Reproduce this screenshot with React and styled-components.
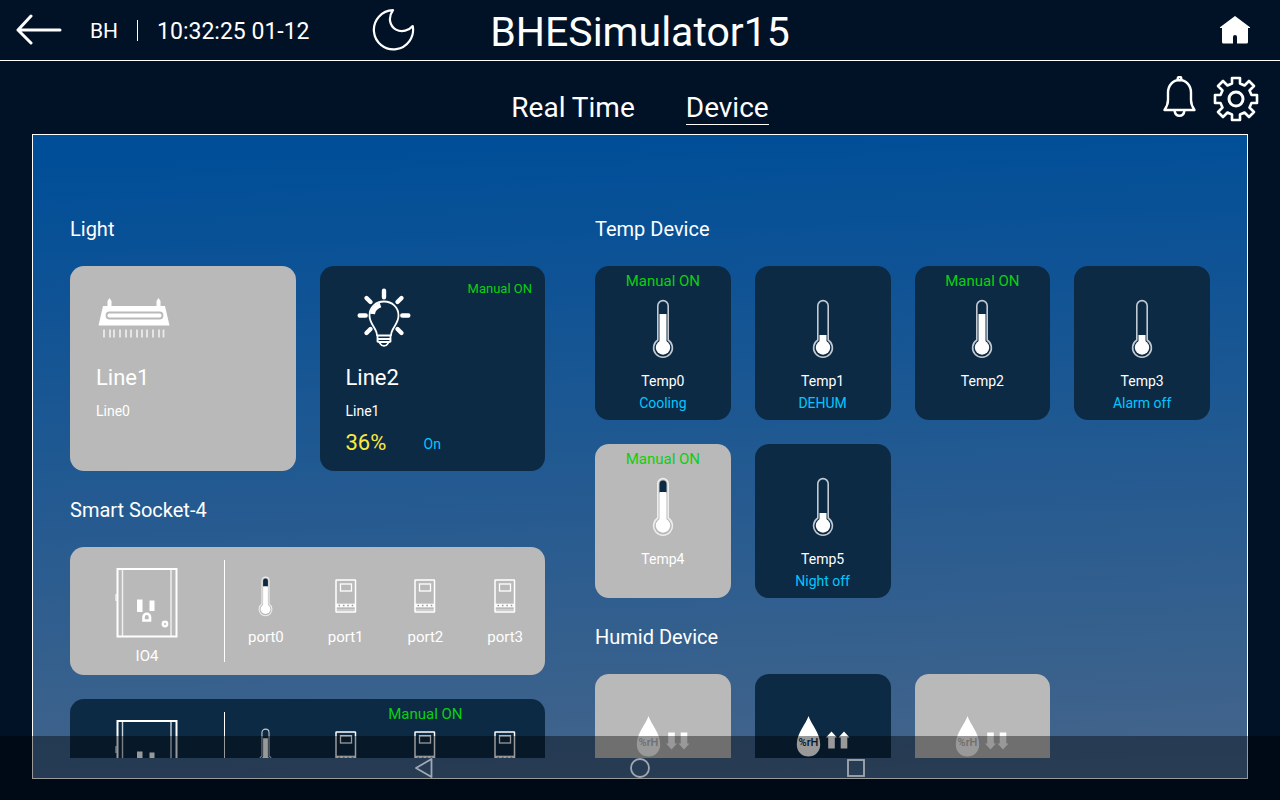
import React from "react";
import styled, { createGlobalStyle, ThemeProvider } from "styled-components";

const theme = {
  page: "#011227",
  card: "#0d2a45",
  cardOff: "#b9b9b9",
  green: "#0bd010",
  cyan: "#00c8ff",
  yellow: "#fbe93f",
};

const GlobalStyle = createGlobalStyle`
  * { box-sizing: border-box; }
  body {
    margin: 0;
    background: ${theme.page};
    color: #fff;
    font-family: Roboto, "Liberation Sans", sans-serif;
  }
  h1, h2 { margin: 0; font-weight: 400; }
  button {
    margin: 0;
    padding: 0;
    border: 0;
    background: none;
    color: inherit;
    font: inherit;
    cursor: pointer;
  }
  svg { display: block; flex: none; }
`;

const Screen = styled.div`
  display: flex;
  flex-direction: column;
  height: 100vh;
  padding-bottom: 21px;
`;

const Header = styled.header`
  display: grid;
  grid-template-columns: 1fr auto 1fr;
  align-items: center;
  height: 61px;
  padding: 0 16px;
  border-bottom: 1px solid #fff;
`;

const HeaderLeft = styled.div`
  display: flex;
  align-items: center;
`;

const SiteCode = styled.span`
  margin-left: 28px;
  font-size: 21px;
  line-height: 24px;
  padding-top: 2px;
`;

const HeaderDivider = styled.span`
  width: 1px;
  height: 21px;
  margin: 0 19px;
  background: #fff;
`;

const Clock = styled.time`
  padding-top: 4px;
  font-size: 23px;
  line-height: 26px;
  white-space: nowrap;
`;

const NightButton = styled.button`
  margin-left: 61px;
`;

const Title = styled.h1`
  padding-top: 4px;
  font-size: 41px;
  line-height: 50px;
`;

const HomeButton = styled.button`
  justify-self: end;
  margin-right: 14px;
`;

const Toolbar = styled.div`
  display: grid;
  grid-template-columns: 1fr auto 1fr;
  align-items: end;
  height: 73px;
  padding: 15px 21px 9px;
`;

const Tabs = styled.nav`
  grid-column: 2;
  display: flex;
  gap: 51px;
`;

const Tab = styled.a`
  color: #fff;
  font-size: 28px;
  line-height: 32px;
  text-decoration: none;
  border-bottom: 1px solid ${(p) => (p.$active ? "#fff" : "transparent")};
`;

const Tools = styled.div`
  display: flex;
  gap: 16px;
  align-self: start;
  align-items: flex-start;
  justify-self: end;
`;

const Panel = styled.main`
  flex: 1;
  min-height: 0;
  display: flex;
  margin: 0 32px;
  padding-bottom: 20px;
  border: 1px solid #fff;
  background: linear-gradient(178deg, #004e98 4%, #45658a 100%);
`;

const ScrollArea = styled.div`
  flex: 1;
  display: grid;
  grid-template-columns: 475fr 615fr;
  align-content: start;
  gap: 50px;
  padding: 82px 37px 24px;
  overflow-y: auto;
  scrollbar-width: none;
`;

const Column = styled.div`
  display: flex;
  flex-direction: column;
  gap: 27px;
  min-width: 0;
`;

const SectionTitle = styled.h2`
  margin-bottom: 25px;
  font-size: 20px;
  line-height: 24px;
`;

const Grid = styled.div`
  display: grid;
  grid-template-columns: repeat(${(p) => p.$columns}, minmax(0, 1fr));
  gap: 24px;
`;

const Card = styled.div`
  border-radius: 14px;
  background: ${(p) => (p.$off ? p.theme.cardOff : p.theme.card)};
`;

const LightCardBox = styled(Card).attrs({ as: "button", type: "button" })`
  display: flex;
  flex-direction: column;
  height: 205px;
  padding: 13px 13px 15px 26px;
  text-align: left;
  background: ${(p) => (p.$off ? p.theme.cardOff : p.theme.card)};
`;

const LightTop = styled.span`
  display: flex;
  justify-content: space-between;
  width: 100%;
`;

const LightIcon = styled.span`
  display: flex;
  align-items: center;
  justify-content: center;
  width: 76px;
  height: 60px;
  margin-top: 9px;
`;

const LightMode = styled.span`
  color: ${(p) => p.theme.green};
  font-size: 13px;
  line-height: 20px;
`;

const LightName = styled.span`
  margin-top: 17px;
  font-size: 22px;
  line-height: 26px;
`;

const LightGroup = styled.span`
  margin-top: 10px;
  font-size: 14px;
  line-height: 20px;
`;

const LightState = styled.span`
  display: flex;
  align-items: center;
  margin-top: 9px;
`;

const Level = styled.span`
  width: 78px;
  color: ${(p) => p.theme.yellow};
  font-size: 22px;
  line-height: 26px;
`;

const Switched = styled.span`
  padding-top: 2px;
  color: ${(p) => p.theme.cyan};
  font-size: 14px;
  line-height: 20px;
`;

const DeviceCardBox = styled(Card).attrs({ as: "button", type: "button" })`
  display: flex;
  flex-direction: column;
  align-items: center;
  height: 154px;
  padding: 5px 4px 6px;
  background: ${(p) => (p.$off ? p.theme.cardOff : p.theme.card)};
`;

const Mode = styled.span`
  height: 20px;
  color: ${(p) => p.theme.green};
  font-size: 15px;
  line-height: 20px;
  white-space: nowrap;
`;

const DeviceIcon = styled.span`
  display: flex;
  align-items: center;
  justify-content: center;
  height: 60px;
  margin: 8px 0 11px;
`;

const DeviceName = styled.span`
  font-size: 14px;
  line-height: 22px;
`;

const DeviceStatus = styled(DeviceName)`
  color: ${(p) => p.theme.cyan};
`;

const SocketList = styled.div`
  display: flex;
  flex-direction: column;
  gap: 24px;
`;

const SocketCard = styled(Card)`
  display: grid;
  grid-template-columns: 155fr 320fr;
  height: 128px;
`;

const SocketUnit = styled.div`
  display: flex;
  flex-direction: column;
  align-items: center;
  gap: 7px;
  height: 102px;
  margin-top: 13px;
  padding-top: 7px;
  border-right: 1px solid #fff;
`;

const Caption = styled.span`
  font-size: 15px;
  line-height: 20px;
`;

const Ports = styled.div`
  display: grid;
  grid-template-columns: repeat(4, 1fr);
  padding-left: 1px;
`;

const PortButton = styled.button`
  display: flex;
  flex-direction: column;
  align-items: center;
  padding-top: 5px;
`;

const PortIcon = styled.span`
  display: flex;
  align-items: center;
  height: 48px;
  margin-bottom: 7px;
`;

const SystemBar = styled.nav`
  position: fixed;
  inset: auto 0 0;
  display: flex;
  align-items: center;
  justify-content: center;
  gap: 196px;
  height: 64px;
  background: rgba(0, 0, 0, 0.4);
`;

const BackArrow = () => (
  <svg width="46" height="32" viewBox="0 0 46 32" fill="none" stroke="#fff" strokeWidth="3" strokeLinecap="round" strokeLinejoin="round">
    <path d="M15 2 2 16l13 13M2 16h42" />
  </svg>
);

const Moon = () => (
  <svg width="44" height="44" viewBox="0 0 44 44" fill="none" stroke="#fff" strokeWidth="2.2" strokeLinejoin="round">
    <path d="M22 2.200A19.600 19.600 0 1 0 41.700 18C38 22.500 31 24.800 25 21.600C18.500 18 16.800 9.500 22 2.200Z" />
  </svg>
);

const Home = () => (
  <svg width="30" height="28" viewBox="0 0 30 28" fill="#fff">
    <path d="M15 0 30 11.300V12h-2v14a1.500 1.500 0 0 1-1.500 1.500H17V21a2 2 0 0 0-4 0v6.500H3.500A1.500 1.500 0 0 1 2 26V12H0v-.7Z" />
  </svg>
);

const Bell = () => (
  <svg width="34" height="42" viewBox="0 0 34 42" fill="none" stroke="#fff" strokeWidth="2.400" strokeLinejoin="round">
    <path d="M1.500 34C4 30.500 5 28 5 24V16.500C5 9.500 10 4 16.500 4S28 9.500 28 16.500V24c0 4 1 6.500 3.500 10Z" />
    <circle cx="16.500" cy="2.600" r="1.800" />
    <path d="M11.500 34.500c.5 3.500 2.500 5.300 5 5.300s4.500-1.800 5-5.300" />
  </svg>
);

const Gear = () => (
  <svg width="46" height="46" viewBox="0 0 46 46" fill="none" stroke="#fff" strokeWidth="2.600" strokeLinejoin="round">
    <path d="M19 2h8v5.500l4.500 2L36 5l5 5-4.500 4.500 2 4.500H44v8h-5.500l-2 4.500L41 36l-5 5-4.500-4.500-4.500 2V44h-8v-5.500l-4.500-2L10 41l-5-5 4.500-4.500-2-4.500H2v-8h5.500l2-4.500L5 10l5-5 4.500 4.500 4.500-2Z" />
    <circle cx="23" cy="23" r="7" strokeWidth="3" />
  </svg>
);

const Lamp = () => (
  <svg width="72" height="40" viewBox="0 0 72 40">
    <path fill="#fff" d="M9.500 8V3l2-3 2 3v5h45V3l2-3 2 3v5H67l4.500 19.500H.5L5 8Z" />
    <rect x="8.500" y="14.500" width="56" height="6" rx="3" fill="#fff" stroke="#b9b9b9" strokeWidth="1.800" />
    <path
      stroke="#fff"
      strokeOpacity="0.7"
      strokeWidth="1.800"
      d="M6 31.500v8M12 31.500v8M16 31.500v8M22 31.500v8M28 31.500v8M33 31.500v8M39 31.500v8M44 31.500v8M49 31.500v8M55 31.500v8M61 31.500v8M65.500 31.500v8"
    />
  </svg>
);

const Bulb = () => (
  <svg width="54" height="60" viewBox="0 0 54 60" fill="none" stroke="#fff" strokeLinecap="round" strokeLinejoin="round">
    <path strokeWidth="4.400" d="M27 2.700v6.500M9.500 10l4 4M44.500 10l-4 4M2.700 27.500h6M45.300 27.500h6M9.500 45l4-4M44.500 45l-4-4" />
    <path
      strokeWidth="1.800"
      d="M20 47.500C20 40 12.500 36.500 12.500 27.500C12.500 19 19 13.500 27 13.500s14.500 5.500 14.500 14c0 9-7.500 12.500-7.500 20ZM20.500 48v5.500c2 0 2.500 1 3 2.500 1 2.500 6 2.500 7 0 .5-1.500 1-2.500 3-2.500V48M21 51h12.500M22 54h10.500"
    />
    <path strokeWidth="5" strokeLinecap="butt" d="M15.500 26C16 22 19 18.500 23.500 17" />
  </svg>
);

const Thermometer = ({ level, off, small }) => (
  <svg width={small ? 15 : 22} height={small ? 41 : 60} viewBox="0 0 22 60">
    <path
      d="M5.800 41V6.800a5.200 5.200 0 0 1 10.400 0V41a9.400 9.400 0 1 1-10.400 0Z"
      fill={off ? theme.cardOff : theme.card}
      stroke="#fff"
      strokeOpacity="0.75"
      strokeWidth="1.600"
    />
    {off && <path d="M7.500 16V7a3.500 3.500 0 0 1 7 0v9Z" fill={theme.card} />}
    <circle cx="11" cy="48.500" r="7.200" fill="#fff" />
    <rect x="7.500" y={level === "low" ? 36 : 15} width="7" height={level === "low" ? 11 : 32} fill="#fff" />
  </svg>
);

const Outlet = () => (
  <svg width="64" height="72" viewBox="0 0 64 72" fill="none" stroke="#fff">
    <rect x="2.500" y="2" width="59" height="67.500" strokeWidth="2" />
    <path strokeWidth="1.400" strokeOpacity="0.8" d="M7.500 3v66M56 3v66M1 27v7" />
    <path fill="#fff" stroke="none" d="M22 32.500h5.500V45H22ZM34.500 33.500h5V44h-5Z" />
    <path strokeWidth="2.600" d="M28.500 53.500V50a3 3 0 0 1 6.500 0v3.500Z" />
    <circle cx="50" cy="57" r="2.200" strokeWidth="2.400" />
  </svg>
);

const Controller = () => (
  <svg width="22" height="34" viewBox="0 0 22 34" fill="none" stroke="#fff">
    <rect x="1" y="1" width="19.500" height="32" rx="0.500" strokeWidth="1.500" />
    <rect x="5.500" y="5" width="11" height="7" strokeWidth="1.300" />
    <path strokeWidth="3.600" d="M1 26.500h19.500" />
    <path stroke="#999" strokeWidth="1.400" strokeDasharray="1.600 2.800" d="M3.500 26.500h15" />
    <path strokeWidth="1" strokeOpacity="0.6" d="M1 31h19.500" />
  </svg>
);

const Humidity = ({ up, off }) => (
  <svg width="54" height="42" viewBox="0 0 54 42" fill="#fff">
    <path d="M12.500 0C15 8 24.200 17 24.200 28.500C24.200 36 19 40.500 12.500 40.500S.8 36 .8 28.500C.8 17 10 8 12.500 0Z" />
    <text
      x="12.500"
      y="30"
      textAnchor="middle"
      fontFamily="Roboto, sans-serif"
      fontSize="11"
      fontWeight="500"
      fill={off ? theme.cardOff : theme.card}
    >
      %rH
    </text>
    {up ? (
      <path d="M35.500 15.500l5.500 6h-2.200v11h-6.600v-11H30ZM48 15.500l5.500 6h-2.200v11h-6.600v-11h-2.200Z" />
    ) : (
      <path d="M35.500 33.500l5.500-6h-2.200v-11h-6.600v11H30ZM48 33.500l5.500-6h-2.200v-11h-6.600v11h-2.200Z" />
    )}
  </svg>
);

const lights = [
  { name: "Line1", group: "Line0", off: true, icon: <Lamp /> },
  { name: "Line2", group: "Line1", mode: "Manual ON", level: "36%", state: "On", icon: <Bulb /> },
];

const sockets = [
  {
    name: "IO4",
    off: true,
    ports: [{ name: "port0", thermo: true }, { name: "port1" }, { name: "port2" }, { name: "port3" }],
  },
  { ports: [{ thermo: true }, {}, { mode: "Manual ON" }, {}] },
];

const temps = [
  { name: "Temp0", mode: "Manual ON", status: "Cooling", level: "high" },
  { name: "Temp1", status: "DEHUM", level: "low" },
  { name: "Temp2", mode: "Manual ON", level: "high" },
  { name: "Temp3", status: "Alarm off", level: "low" },
  { name: "Temp4", mode: "Manual ON", level: "high", off: true },
  { name: "Temp5", status: "Night off", level: "low" },
];

const humids = [{ off: true }, { up: true }, { off: true }];

const LightCard = ({ item }) => (
  <LightCardBox $off={item.off}>
    <LightTop>
      <LightIcon>{item.icon}</LightIcon>
      <LightMode>{item.mode}</LightMode>
    </LightTop>
    <LightName>{item.name}</LightName>
    <LightGroup>{item.group}</LightGroup>
    {item.level && (
      <LightState>
        <Level>{item.level}</Level>
        <Switched>{item.state}</Switched>
      </LightState>
    )}
  </LightCardBox>
);

const DeviceCard = ({ item, icon }) => (
  <DeviceCardBox $off={item.off}>
    <Mode>{item.mode}</Mode>
    <DeviceIcon>{icon}</DeviceIcon>
    {item.name && <DeviceName>{item.name}</DeviceName>}
    {item.status && <DeviceStatus>{item.status}</DeviceStatus>}
  </DeviceCardBox>
);

const Socket = ({ item }) => (
  <SocketCard $off={item.off}>
    <SocketUnit>
      <Outlet />
      {item.name && <Caption>{item.name}</Caption>}
    </SocketUnit>
    <Ports>
      {item.ports.map((port, n) => (
        <PortButton type="button" key={n}>
          <Mode>{port.mode}</Mode>
          <PortIcon>
            {port.thermo ? <Thermometer small level="high" off={item.off} /> : <Controller />}
          </PortIcon>
          {port.name && <Caption>{port.name}</Caption>}
        </PortButton>
      ))}
    </Ports>
  </SocketCard>
);

export default function App() {
  return (
    <ThemeProvider theme={theme}>
      <GlobalStyle />
      <Screen>
        <Header>
          <HeaderLeft>
            <button type="button" aria-label="Back"><BackArrow /></button>
            <SiteCode>BH</SiteCode>
            <HeaderDivider />
            <Clock>10:32:25 01-12</Clock>
            <NightButton type="button" aria-label="Night mode"><Moon /></NightButton>
          </HeaderLeft>
          <Title>BHESimulator15</Title>
          <HomeButton type="button" aria-label="Home"><Home /></HomeButton>
        </Header>
        <Toolbar>
          <Tabs>
            <Tab href="#real-time">Real Time</Tab>
            <Tab href="#device" $active>Device</Tab>
          </Tabs>
          <Tools>
            <button type="button" aria-label="Alarms"><Bell /></button>
            <button type="button" aria-label="Settings"><Gear /></button>
          </Tools>
        </Toolbar>
        <Panel>
          <ScrollArea>
            <Column>
              <section>
                <SectionTitle>Light</SectionTitle>
                <Grid $columns={2}>
                  {lights.map((item) => <LightCard key={item.name} item={item} />)}
                </Grid>
              </section>
              <section>
                <SectionTitle>Smart Socket-4</SectionTitle>
                <SocketList>
                  {sockets.map((item, i) => <Socket key={i} item={item} />)}
                </SocketList>
              </section>
            </Column>
            <Column>
              <section>
                <SectionTitle>Temp Device</SectionTitle>
                <Grid $columns={4}>
                  {temps.map((item) => (
                    <DeviceCard
                      key={item.name}
                      item={item}
                      icon={<Thermometer level={item.level} off={item.off} />}
                    />
                  ))}
                </Grid>
              </section>
              <section>
                <SectionTitle>Humid Device</SectionTitle>
                <Grid $columns={4}>
                  {humids.map((item, i) => (
                    <DeviceCard key={i} item={item} icon={<Humidity up={item.up} off={item.off} />} />
                  ))}
                </Grid>
              </section>
            </Column>
          </ScrollArea>
        </Panel>
      </Screen>
      <SystemBar aria-label="System">
        <button type="button" aria-label="System back">
          <svg width="20" height="20" viewBox="0 0 20 20" fill="none" stroke="#a0a9b2" strokeWidth="1.800" strokeLinejoin="round">
            <path d="M17.500 1v18L2 10Z" />
          </svg>
        </button>
        <button type="button" aria-label="System home">
          <svg width="20" height="20" viewBox="0 0 20 20" fill="none" stroke="#a0a9b2" strokeWidth="1.800">
            <circle cx="10" cy="10" r="9" />
          </svg>
        </button>
        <button type="button" aria-label="Recent apps">
          <svg width="20" height="20" viewBox="0 0 20 20" fill="none" stroke="#a0a9b2" strokeWidth="1.800">
            <rect x="2" y="2" width="16" height="16" />
          </svg>
        </button>
      </SystemBar>
    </ThemeProvider>
  );
}
